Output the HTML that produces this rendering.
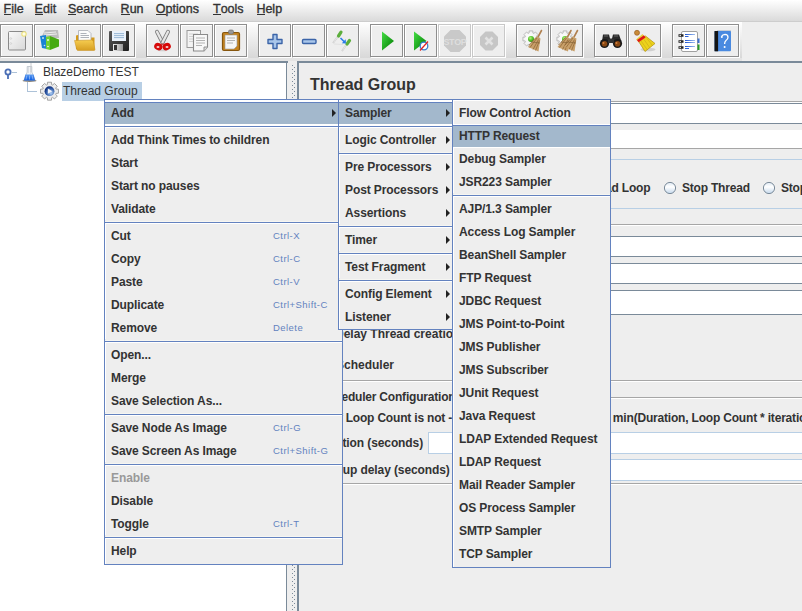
<!DOCTYPE html>
<html><head><meta charset="utf-8">
<style>
*{box-sizing:border-box;margin:0;padding:0}
html,body{width:802px;height:611px;overflow:hidden;background:#eeeeee;font-family:"Liberation Sans",sans-serif;color:#333}
.a{position:absolute}
#menubar{left:0;top:0;width:802px;height:22px;background:linear-gradient(#ffffff,#dadada);border-bottom:1px solid #cdcdcd}
.mb{position:absolute;top:2px;font:12.5px/15px "Liberation Sans",sans-serif;color:#333;white-space:nowrap;-webkit-text-stroke:0.35px #333}
.mb u{text-decoration:none;position:relative}
.mb u:after{content:"";position:absolute;left:0.4px;right:0;top:12px;height:1px;background:#333}
#toolbar{left:0;top:22px;width:742px;height:39px;background:linear-gradient(#ffffff 0,#d8d8d8 36px,#e4e4e4 36px)}
#tbrest{left:742px;top:22px;width:60px;height:39px;background:#eeeeee}
.tb{position:absolute;top:24px;width:33px;height:33px;border:1px solid #8e8e8e;box-shadow:inset 1px 1px 0 #fff,1px 1px 0 #fff;background:#eeeeee}
.tb.dis{border-color:#c8c8c8}
.tb svg{position:absolute;left:-1px;top:-1px}
#tbline{left:0;top:61px;width:802px;height:2px;background:linear-gradient(90deg,#7a8a99 0 288px,#eeeeee 288px 297px,#7a8a99 297px)}
#tree{left:0;top:63px;width:286px;height:548px;background:#fff}
#treeborder{left:286px;top:61px;width:1px;height:550px;background:#7a8a99}
#divider{left:287px;top:63px;width:10px;height:548px;background:#eeeeee}
#rpborder{left:297px;top:61px;width:2px;height:550px;background:#7a8a99}
#rp{left:299px;top:63px;width:503px;height:548px;background:#eeeeee}
.b{font:bold 12px "Liberation Sans",sans-serif;letter-spacing:-0.2px;white-space:nowrap;color:#333}
.menu{position:absolute;background:#eeeeee;border:1px solid #6382bf;box-shadow:inset 1px 1px 0 #fff;padding:1px 0 0 1px}
.it{position:relative;height:23px;font:bold 12px/25px "Liberation Sans",sans-serif;letter-spacing:-0.1px;white-space:nowrap;color:#333;padding-left:5px}
.it.sel{background:linear-gradient(#fff 0 1px,#6382bf 1px 2px,#a3b8cc 2px);margin-left:-1px;padding-left:6px}
.it.sel+.it,.it.sel+.sep{box-shadow:inset 0 1px 0 #fff}
.it .k{position:absolute;top:0;font:9.5px/24px "Liberation Sans",sans-serif;letter-spacing:0.45px;color:#6382bf}
.it .ar{position:absolute;top:8px;width:0;height:0;border-top:4px solid transparent;border-bottom:4px solid transparent;border-left:4px solid #222}
.it.dis{color:#999}
.it.sel .ar{margin-left:1px}
.sep{height:4px;background:linear-gradient(#eeeeee 0 1px,#f6f6f2 1px 2px,#6382bf 2px 3px,#fff 3px);margin-left:-1px}
.it.sel+.sep{background:linear-gradient(#fff 0 2px,#6382bf 2px 3px,#fff 3px)}
.hl{position:absolute;height:1px}
</style></head><body>

<!-- menubar -->
<div id="menubar" class="a"></div>
<div class="mb" style="left:3.6px"><u>F</u>ile</div>
<div class="mb" style="left:34.6px"><u>E</u>dit</div>
<div class="mb" style="left:68px"><u>S</u>earch</div>
<div class="mb" style="left:120.6px"><u>R</u>un</div>
<div class="mb" style="left:155.8px"><u>O</u>ptions</div>
<div class="mb" style="left:213px"><u>T</u>ools</div>
<div class="mb" style="left:256.4px"><u>H</u>elp</div>

<!-- toolbar -->
<div id="toolbar" class="a"></div>
<div id="tbrest" class="a"></div>
<div class="tb" style="left:0px"><svg width="34" height="34" viewBox="0 0 34 34"><defs><linearGradient id="g1" x1="0" y1="0" x2="1" y2="1"><stop offset="0" stop-color="#fafafa"/><stop offset="1" stop-color="#d8d8d8"/></linearGradient></defs>
<rect x="8.5" y="7.5" width="17" height="18.5" rx="1" fill="url(#g1)" stroke="#8a8a8a" stroke-width="1"/>
<circle cx="10.8" cy="14.5" r="0.8" fill="#fff" stroke="#aaa" stroke-width="0.4"/><circle cx="10.8" cy="19.5" r="0.8" fill="#fff" stroke="#aaa" stroke-width="0.4"/>
<circle cx="24" cy="10" r="2.2" fill="#fffde8" stroke="#ede27c" stroke-width="1.1"/></svg></div>
<div class="tb" style="left:34px"><svg width="34" height="34" viewBox="0 0 34 34"><polygon points="8,12 11,6 24,6 25,14 12,14" fill="#bdbdbd"/><path d="M10,9 L22,8 M10,11 L23,10" stroke="#eee" stroke-width="1"/>
<polygon points="6,12 12,11 13,25 8,24" fill="#1a84d4"/><circle cx="9" cy="14" r="1" fill="#cde"/><circle cx="10.5" cy="21.5" r="0.8" fill="#cde"/>
<polygon points="12,13 16,12 16,26 12,25" fill="#70d030"/><polygon points="16,12 25,15.5 25,22.5 16,26" fill="#46aa12"/>
<circle cx="14" cy="16" r="1" fill="#e8ffd8"/><circle cx="14" cy="22.5" r="0.8" fill="#fff"/></svg></div>
<div class="tb" style="left:68px"><svg width="34" height="34" viewBox="0 0 34 34"><path d="M8,11.5 L12,10.5 L13,13.5 L26.5,13.5 L26.5,25 L8,25 Z" fill="#d49a1a"/>
<path d="M10.5,6.5 L20,6.5 L23,9.5 L23,17 L10.5,17 Z" fill="#fbfbfb" stroke="#a8acb4" stroke-width="0.8"/>
<path d="M12.5,9.5 h6 M12.5,11.5 h8.5 M12.5,13.5 h8.5" stroke="#9aa0a8" stroke-width="0.8"/>
<defs><linearGradient id="g3" x1="0" y1="0" x2="0" y2="1"><stop offset="0" stop-color="#f6cd50"/><stop offset="1" stop-color="#d69e22"/></linearGradient></defs>
<path d="M6.5,16.5 L23.5,16 Q25,16 25.3,17.5 L27,25.5 Q27,26.5 26,26.5 L10,26.5 Q9,26.5 8.7,25.5 Z" fill="url(#g3)" stroke="#c89020" stroke-width="0.5"/></svg></div>
<div class="tb" style="left:102px"><svg width="34" height="34" viewBox="0 0 34 34"><defs><linearGradient id="g4" x1="0" y1="0" x2="1" y2="1"><stop offset="0" stop-color="#5a5a5a"/><stop offset="1" stop-color="#1e1e1e"/></linearGradient><linearGradient id="g4b" x1="0" y1="0" x2="1" y2="0"><stop offset="0" stop-color="#eee"/><stop offset="1" stop-color="#999"/></linearGradient></defs>
<rect x="7" y="7" width="20" height="20" rx="1" fill="url(#g4)"/>
<rect x="10" y="7" width="14" height="10" fill="#eaf2fb"/><path d="M12,9.6 h10 M12,11.6 h10 M12,13.6 h10" stroke="#8fb0d0" stroke-width="0.9"/>
<rect x="11" y="20" width="10" height="7" fill="url(#g4b)"/><rect x="12" y="21" width="3" height="5" fill="#333"/></svg></div>
<div class="tb" style="left:146px"><svg width="34" height="34" viewBox="0 0 34 34"><path d="M11,7.8 L16.5,18.5" stroke="#7a7a7a" stroke-width="3.9" stroke-linecap="round"/><path d="M11,7.8 L16.5,18.5" stroke="#e6e6e6" stroke-width="2.3" stroke-linecap="round"/>
<path d="M22,7.8 L16.5,18.5" stroke="#7a7a7a" stroke-width="3.9" stroke-linecap="round"/><path d="M22,7.8 L16.5,18.5" stroke="#e6e6e6" stroke-width="2.3" stroke-linecap="round"/>
<ellipse cx="16.5" cy="26.3" rx="5" ry="1" fill="#d0d0d0"/>
<path d="M16.5,19.5 L14,20.5 L18.8,20.5 Z" fill="#d60a0a"/>
<ellipse cx="12.3" cy="22.6" rx="4.2" ry="3.6" fill="#d60a0a" transform="rotate(25 12.3 22.6)"/><ellipse cx="20.7" cy="22.6" rx="4.2" ry="3.6" fill="#d60a0a" transform="rotate(-25 20.7 22.6)"/>
<ellipse cx="12" cy="23" rx="1.5" ry="1" fill="#f4d0d0"/><ellipse cx="21" cy="23" rx="1.5" ry="1" fill="#f4d0d0"/></svg></div>
<div class="tb" style="left:180px"><svg width="34" height="34" viewBox="0 0 34 34"><rect x="7" y="6.5" width="13.5" height="17" fill="#f4f4f4" stroke="#9a9a9a" stroke-width="1"/><path d="M9,10 h9 M9,12.5 h9 M9,15 h9 M9,17.5 h6" stroke="#ccc" stroke-width="0.9"/>
<path d="M13.5,10.5 H27.5 V23 L24,27 H13.5 Z" fill="#f8f8f8" stroke="#8a8a8a" stroke-width="1.1"/><path d="M24,27 V23 H27.5" fill="#ddd" stroke="#8a8a8a" stroke-width="0.9"/>
<path d="M16,14 h9 M16,16.5 h9 M16,19 h9 M16,21.5 h6" stroke="#aaa" stroke-width="0.9"/></svg></div>
<div class="tb" style="left:214px"><svg width="34" height="34" viewBox="0 0 34 34"><rect x="8.5" y="8.5" width="17" height="18" rx="1.5" fill="#c58420" stroke="#86560e" stroke-width="1.2"/>
<path d="M11,11 H23 V22 L20,25 H11 Z" fill="#f6f6f6" stroke="#999" stroke-width="0.6"/><path d="M13,14 h8 M13,16.5 h8 M13,19 h6" stroke="#aaa" stroke-width="0.9"/>
<rect x="14.5" y="6" width="5" height="4" rx="1.5" fill="#999" stroke="#666" stroke-width="0.6"/></svg></div>
<div class="tb" style="left:258px"><svg width="34" height="34" viewBox="0 0 34 34"><path d="M15,10.5 h4 v5 h5 v4 h-5 v5 h-4 v-5 h-5 v-4 h5 Z" fill="#a9c6ea" stroke="#3b64a8" stroke-width="1.4" stroke-linejoin="round"/></svg></div>
<div class="tb" style="left:292px"><svg width="34" height="34" viewBox="0 0 34 34"><rect x="10.5" y="15.5" width="13.5" height="4" rx="1" fill="#a9c6ea" stroke="#3b64a8" stroke-width="1.4"/></svg></div>
<div class="tb" style="left:326px"><svg width="34" height="34" viewBox="0 0 34 34"><path d="M7,19 L13,11" stroke="#c8c8c8" stroke-width="1.6"/><path d="M7.5,18.5 L12.5,11.5" stroke="#fff" stroke-width="0.6"/>
<path d="M12.5,12 L15,8.2" stroke="#5cae3c" stroke-width="3.2" stroke-linecap="round"/>
<path d="M16,27 L21.5,19" stroke="#c8c8c8" stroke-width="1.6"/><path d="M16.5,26.5 L21,19.5" stroke="#fff" stroke-width="0.6"/>
<path d="M21,20 L23.5,16.5" stroke="#5cae3c" stroke-width="3.2" stroke-linecap="round"/>
<path d="M14.5,14 L18.5,18" stroke="#2a7de8" stroke-width="1.6"/><path d="M20,19.5 L15.8,19.2 L19.7,15.3 Z" fill="#2a7de8"/>
<path d="M8,20 L17,20.5" stroke="#ddd" stroke-width="0.8"/></svg></div>
<div class="tb" style="left:370px"><svg width="34" height="34" viewBox="0 0 34 34"><defs><linearGradient id="g11" x1="0" y1="0" x2="1" y2="1"><stop offset="0" stop-color="#44dd44"/><stop offset="1" stop-color="#007a00"/></linearGradient></defs>
<path d="M12,7.5 L24,17 L12,26.5 Z" fill="url(#g11)"/></svg></div>
<div class="tb" style="left:404px"><svg width="34" height="34" viewBox="0 0 34 34"><defs><linearGradient id="g12" x1="0" y1="0" x2="1" y2="1"><stop offset="0" stop-color="#44dd44"/><stop offset="1" stop-color="#007a00"/></linearGradient></defs>
<path d="M10,7.5 L22.5,17 L10,26.5 Z" fill="url(#g12)"/>
<circle cx="20" cy="22" r="3.8" fill="#fff" stroke="#3a7ed0" stroke-width="1.3"/><path d="M16,26.5 L24,17.5" stroke="#e02020" stroke-width="1.2"/></svg></div>
<div class="tb dis" style="left:438px"><svg width="34" height="34" viewBox="0 0 34 34"><polygon points="12.5,6 21.5,6 28,12.5 28,21.5 21.5,28 12.5,28 6,21.5 6,12.5" fill="#c9c9c9"/>
<text x="17" y="20.8" text-anchor="middle" font-family="Liberation Sans" font-weight="bold" font-size="9" letter-spacing="-0.3" fill="#dedede">STOP</text></svg></div>
<div class="tb dis" style="left:472px"><svg width="34" height="34" viewBox="0 0 34 34"><polygon points="13.5,7.5 20.5,7.5 26,13 26,21 20.5,26.5 13.5,26.5 8,21 8,13" fill="#c6c6c6"/>
<path d="M13.5,13.5 L20.5,20.5 M20.5,13.5 L13.5,20.5" stroke="#e2e2e2" stroke-width="2.6"/></svg></div>
<div class="tb" style="left:516px"><svg width="34" height="34" viewBox="0 0 34 34"><path d="M6.55,-2.17 L8.98,-2.01 L8.98,2.01 L6.55,2.17 L6.17,3.10 L7.77,4.93 L4.93,7.77 L3.10,6.17 L2.17,6.55 L2.01,8.98 L-2.01,8.98 L-2.17,6.55 L-3.10,6.17 L-4.93,7.77 L-7.77,4.93 L-6.17,3.10 L-6.55,2.17 L-8.98,2.01 L-8.98,-2.01 L-6.55,-2.17 L-6.17,-3.10 L-7.77,-4.93 L-4.93,-7.77 L-3.10,-6.17 L-2.17,-6.55 L-2.01,-8.98 L2.01,-8.98 L2.17,-6.55 L3.10,-6.17 L4.93,-7.77 L7.77,-4.93 L6.17,-3.10 Z" fill="url(#gw)" stroke="#b4b4b4" stroke-width="1" transform="translate(15,15) scale(0.9)"/>
<defs><radialGradient id="gw" cx="0.4" cy="0.4" r="0.8"><stop offset="0" stop-color="#ffffff"/><stop offset="0.7" stop-color="#eeeeee"/><stop offset="1" stop-color="#cfcfcf"/></radialGradient><radialGradient id="gg" cx="0.4" cy="0.35" r="0.7"><stop offset="0" stop-color="#b8f080"/><stop offset="0.5" stop-color="#5cc830"/><stop offset="1" stop-color="#2a8a10"/></radialGradient></defs>
<circle cx="15" cy="15" r="3" fill="url(#gg)"/><g transform="translate(0,0)"><path d="M25.5,6.5 L22,13" stroke="#b08050" stroke-width="1.6" stroke-linecap="round"/>
<path d="M20.5,12.5 L24.5,14.5 L22.5,27.5 L12,23 Z" fill="#c8a06a"/>
<path d="M14,23.5 L21,14 M17,25.5 L22.5,15.5 M19.5,26.5 L23.5,16.5 M13,21 L20,13.5" stroke="#8c6230" stroke-width="0.7"/>
<path d="M15.5,18 L24,19" stroke="#7a5a30" stroke-width="0.6"/></g></svg></div>
<div class="tb" style="left:550px"><svg width="34" height="34" viewBox="0 0 34 34"><path d="M6.55,-2.17 L8.98,-2.01 L8.98,2.01 L6.55,2.17 L6.17,3.10 L7.77,4.93 L4.93,7.77 L3.10,6.17 L2.17,6.55 L2.01,8.98 L-2.01,8.98 L-2.17,6.55 L-3.10,6.17 L-4.93,7.77 L-7.77,4.93 L-6.17,3.10 L-6.55,2.17 L-8.98,2.01 L-8.98,-2.01 L-6.55,-2.17 L-6.17,-3.10 L-7.77,-4.93 L-4.93,-7.77 L-3.10,-6.17 L-2.17,-6.55 L-2.01,-8.98 L2.01,-8.98 L2.17,-6.55 L3.10,-6.17 L4.93,-7.77 L7.77,-4.93 L6.17,-3.10 Z" fill="url(#gw)" stroke="#b4b4b4" stroke-width="1" transform="translate(15,15) scale(0.9)"/>
<defs><radialGradient id="gw" cx="0.4" cy="0.4" r="0.8"><stop offset="0" stop-color="#ffffff"/><stop offset="0.7" stop-color="#eeeeee"/><stop offset="1" stop-color="#cfcfcf"/></radialGradient><radialGradient id="gg" cx="0.4" cy="0.35" r="0.7"><stop offset="0" stop-color="#b8f080"/><stop offset="0.5" stop-color="#5cc830"/><stop offset="1" stop-color="#2a8a10"/></radialGradient></defs>
<circle cx="15" cy="15" r="3" fill="url(#gg)"/><g transform="translate(-4.5,0)"><path d="M25.5,6.5 L22,13" stroke="#b08050" stroke-width="1.6" stroke-linecap="round"/>
<path d="M20.5,12.5 L24.5,14.5 L22.5,27.5 L12,23 Z" fill="#c8a06a"/>
<path d="M14,23.5 L21,14 M17,25.5 L22.5,15.5 M19.5,26.5 L23.5,16.5 M13,21 L20,13.5" stroke="#8c6230" stroke-width="0.7"/>
<path d="M15.5,18 L24,19" stroke="#7a5a30" stroke-width="0.6"/></g><g transform="translate(2,0)"><path d="M25.5,6.5 L22,13" stroke="#b08050" stroke-width="1.6" stroke-linecap="round"/>
<path d="M20.5,12.5 L24.5,14.5 L22.5,27.5 L12,23 Z" fill="#c8a06a"/>
<path d="M14,23.5 L21,14 M17,25.5 L22.5,15.5 M19.5,26.5 L23.5,16.5 M13,21 L20,13.5" stroke="#8c6230" stroke-width="0.7"/>
<path d="M15.5,18 L24,19" stroke="#7a5a30" stroke-width="0.6"/></g></svg></div>
<div class="tb" style="left:594px"><svg width="34" height="34" viewBox="0 0 34 34"><path d="M9,10.5 h6 l1,4 h2 l1,-4 h6 l2.5,7 h-19.5 Z" fill="#2a2a2a"/>
<circle cx="10.5" cy="19.5" r="4.6" fill="#1a1a1a"/><circle cx="23.5" cy="19.5" r="4.6" fill="#1a1a1a"/>
<rect x="14" y="15" width="6" height="4" fill="#333"/>
<circle cx="10.5" cy="19.8" r="2.8" fill="#8a4812"/><circle cx="23.5" cy="19.8" r="2.8" fill="#8a4812"/>
<circle cx="9.5" cy="19" r="1" fill="#d08040"/><circle cx="22.5" cy="19" r="1" fill="#d08040"/>
<path d="M10,12 h4 M20,12 h4" stroke="#777" stroke-width="0.8"/></svg></div>
<div class="tb" style="left:628px"><svg width="34" height="34" viewBox="0 0 34 34"><ellipse cx="20" cy="25.5" rx="7.5" ry="1.8" fill="#d0d0d0"/>
<circle cx="9" cy="8.8" r="2.5" fill="#c88a38" stroke="#9a6020" stroke-width="0.7"/>
<path d="M10,16.5 L17.5,12 L27,19.5 L17,27.5 Z" fill="#ecd21c" stroke="#b09010" stroke-width="0.7" stroke-linejoin="round"/>
<path d="M16,15.5 L22,24 M19,14.5 L24.5,21.5 M13,17 L19.5,26" stroke="#c8a818" stroke-width="0.6"/>
<path d="M8,15.5 L14.5,10 L17,13 L10.5,18 Z" fill="#e8d040"/>
<path d="M9.8,17.2 L16.8,12.3" stroke="#e01818" stroke-width="2.8"/></svg></div>
<div class="tb" style="left:672px"><svg width="34" height="34" viewBox="0 0 34 34"><rect x="9.5" y="7.5" width="16" height="20" rx="1.5" fill="#fff" stroke="#a0a0a0" stroke-width="1"/>
<path d="M6.5,11.5 h5 M6.5,17.5 h5 M6.5,23.5 h5" stroke="#222" stroke-width="2.4"/><path d="M7.5,11.5 h1.5 M7.5,17.5 h1.5 M7.5,23.5 h1.5" stroke="#ddd" stroke-width="1.2"/>
<defs><linearGradient id="bl" x1="0" y1="0" x2="1" y2="0"><stop offset="0" stop-color="#1850d0"/><stop offset="1" stop-color="#a0c0f0"/></linearGradient></defs>
<path d="M13,10.5 h10 M13,16.5 h10 M13,18.5 h10 M13,22.5 h10" stroke="url(#bl)" stroke-width="1"/>
<path d="M13,12.5 h3.5 M13,24.5 h4" stroke="#2a60d8" stroke-width="1"/>
<rect x="25.5" y="14.5" width="2" height="4.5" fill="#3a70d0"/><rect x="25.5" y="20.5" width="2" height="5.5" fill="#2a9a2a"/></svg></div>
<div class="tb" style="left:706px"><svg width="34" height="34" viewBox="0 0 34 34"><rect x="11" y="6.2" width="14" height="2" fill="#c0c8d0"/>
<rect x="8.5" y="7" width="16.5" height="20.3" rx="1" fill="#4a8ae0"/><rect x="8.5" y="7" width="3.6" height="20.3" fill="#141414"/>
<path d="M15.5,12.5 Q16.5,10.3 19,10.3 Q22,10.4 22,13.2 Q22,15.2 20,16.5 Q18.6,17.6 18.6,20" fill="none" stroke="#fff" stroke-width="1.3"/>
<circle cx="18.6" cy="23" r="1" fill="#fff"/><circle cx="15.8" cy="13" r="1" fill="#fff"/></svg></div>

<div id="tbline" class="a"></div>
<div id="tree" class="a"></div>
<div id="treeborder" class="a"></div>
<div class="a" style="left:287px;top:63px;width:1px;height:548px;background:#fff"></div>
<div id="divider" class="a"></div>
<div class="a" style="left:291px;top:64px;width:5px;height:547px;background-image:radial-gradient(circle at 1.5px 1.5px,#7a8a99 0.9px,transparent 1px),radial-gradient(circle at 3.5px 3.5px,#7a8a99 0.9px,transparent 1px);background-size:4px 4px,4px 4px"></div>
<div id="rpborder" class="a"></div>
<div id="rp" class="a"></div>

<!-- right panel content -->
<div class="a" style="left:310px;top:76px;font:bold 16px/18px 'Liberation Sans',sans-serif;color:#333;white-space:nowrap">Thread Group</div>
<!-- name field -->
<div class="hl" style="left:380px;top:101px;width:422px;background:#a6a6a6"></div>
<div class="a" style="left:380px;top:102px;width:422px;height:22px;background:#fff;border-top:1px solid #fff;border-bottom:1px solid #7a8a99"></div>
<div class="hl" style="left:380px;top:103px;width:422px;background:#7a8a99"></div>
<!-- comments -->
<div class="a" style="left:380px;top:130px;width:422px;height:19px;background:#fff;border-bottom:1px solid #a6a6a6"></div>
<!-- action titled border -->
<div class="hl" style="left:312px;top:159px;width:490px;background:#b8cfe5"></div>
<div class="hl" style="left:312px;top:208px;width:490px;background:#b8cfe5"></div>
<div class="a b" style="left:522px;top:181px;line-height:14px">Start Next Thread Loop</div>
<div class="a b" style="left:682px;top:181px;line-height:14px">Stop Thread</div>
<div class="a b" style="left:781px;top:181px;line-height:14px">Stop Test</div>
<svg class="a" style="left:660px;top:178px" width="20" height="20" viewBox="660 178 20 20"><defs><linearGradient id="rg" x1="0" y1="0" x2="0" y2="1"><stop offset="0" stop-color="#dde8f3"/><stop offset="0.4" stop-color="#ffffff"/><stop offset="1" stop-color="#c4d8ec"/></linearGradient></defs><circle cx="670" cy="188" r="5.6" fill="url(#rg)" stroke="#7a8a99" stroke-width="1"/></svg>
<svg class="a" style="left:759px;top:178px" width="20" height="20" viewBox="759 178 20 20"><circle cx="769" cy="188" r="5.6" fill="url(#rg)" stroke="#7a8a99" stroke-width="1"/></svg>
<!-- thread properties -->
<div class="hl" style="left:312px;top:224px;width:490px;background:#a6a6a6"></div>
<div class="hl" style="left:312px;top:225px;width:490px;background:#fff"></div>
<div class="a" style="left:450px;top:236px;width:352px;height:21px;background:#fff;border-top:1px solid #7a8a99;border-bottom:1px solid #7a8a99"></div>
<div class="a" style="left:450px;top:263px;width:352px;height:21px;background:#fff;border-top:1px solid #7a8a99;border-bottom:1px solid #7a8a99"></div>
<div class="a" style="left:450px;top:290px;width:352px;height:25px;background:#fff;border-top:1px solid #7a8a99;border-bottom:1px solid #7a8a99"></div>
<div class="a b" style="left:335px;top:327px;line-height:14px;letter-spacing:0">Delay Thread creation until needed</div>
<div class="a b" style="left:336px;top:358px;line-height:14px;letter-spacing:0">Scheduler</div>
<div class="hl" style="left:312px;top:380px;width:490px;background:#a6a6a6"></div>
<div class="hl" style="left:312px;top:381px;width:490px;background:#fff"></div>
<div class="hl" style="left:312px;top:397px;width:490px;background:#a6a6a6"></div>
<div class="hl" style="left:312px;top:398px;width:490px;background:#fff"></div>
<div class="a b" style="left:317px;top:390px;line-height:14px;background:#eeeeee;padding:0 3px">Scheduler Configuration</div>
<div class="a b" style="left:335.6px;top:411px;line-height:14px;letter-spacing:-0.19px">If Loop Count is not -1 or Forever, duration will be min(Duration, Loop Count * iteration duration)</div>
<div class="a b" style="left:315.5px;top:436px;line-height:14px;letter-spacing:-0.1px">Duration (seconds)</div>
<div class="a" style="left:428px;top:432px;width:374px;height:22px;background:#fff;border:1px solid #b8cfe5;border-right:0"></div>
<div class="a b" style="left:316px;top:463px;line-height:14px;letter-spacing:-0.1px">Startup delay (seconds)</div>
<div class="a" style="left:455px;top:459px;width:347px;height:22px;background:#fff;border:1px solid #b8cfe5;border-right:0"></div>
<div class="hl" style="left:312px;top:483px;width:490px;background:#a6a6a6"></div>
<div class="hl" style="left:312px;top:484px;width:490px;background:#fff"></div>

<!-- tree -->
<svg class="a" style="left:0;top:63px" width="70" height="40" viewBox="0 63 70 40">
 <defs>
  <linearGradient id="fl" x1="0" y1="0" x2="0" y2="1"><stop offset="0" stop-color="#5a9af0"/><stop offset="1" stop-color="#0a5ae0"/></linearGradient>
  <radialGradient id="gb" cx="0.65" cy="0.7" r="0.7"><stop offset="0" stop-color="#b0cff5"/><stop offset="0.6" stop-color="#3a66b0"/><stop offset="1" stop-color="#0c2a78"/></radialGradient>
 </defs>
 <circle cx="8" cy="72" r="2.6" fill="none" stroke="#4a6eb5" stroke-width="1.8"/>
 <rect x="7.1" y="74" width="1.8" height="5" fill="#4a6eb5"/>
 <rect x="11" y="72" width="6" height="1" fill="#adc2d8"/>
 <rect x="27" y="82" width="1" height="9.5" fill="#adc2d8"/>
 <rect x="27" y="91" width="10" height="1" fill="#adc2d8"/>
 <ellipse cx="29.5" cy="80.8" rx="7" ry="1.1" fill="#3a3020" opacity="0.6"/>
 <path d="M27.2,66.5 L31.8,66.5 L31.8,72 L35,80 L24,80 L27.2,72 Z" fill="#f2f4f6" stroke="#b4bcc6" stroke-width="0.8"/>
 <path d="M28.5,67 L28.5,73 M30.6,67 L30.6,74" stroke="#d4d8de" stroke-width="0.8"/>
 <path d="M25.3,74.6 L33.7,74.6 L35,80.4 L24,80.4 Z" fill="url(#fl)"/>
 <path d="M26.8,75.5 L26,79.5 M29.5,75.5 L29.5,79.5 M32.2,75.5 L33,79.5" stroke="#a8c8f8" stroke-width="0.8" opacity="0.8"/>
 <rect x="30.5" y="63" width="1" height="9" fill="#c8ccd0"/>
 <g transform="translate(49.5,91.2)">
  <path d="M6.55,-2.17 L8.98,-2.01 L8.98,2.01 L6.55,2.17 L6.17,3.10 L7.77,4.93 L4.93,7.77 L3.10,6.17 L2.17,6.55 L2.01,8.98 L-2.01,8.98 L-2.17,6.55 L-3.10,6.17 L-4.93,7.77 L-7.77,4.93 L-6.17,3.10 L-6.55,2.17 L-8.98,2.01 L-8.98,-2.01 L-6.55,-2.17 L-6.17,-3.10 L-7.77,-4.93 L-4.93,-7.77 L-3.10,-6.17 L-2.17,-6.55 L-2.01,-8.98 L2.01,-8.98 L2.17,-6.55 L3.10,-6.17 L4.93,-7.77 L7.77,-4.93 L6.17,-3.10 Z" fill="#ececec" stroke="#9a9a9a" stroke-width="0.9"/>
  <circle r="4.9" fill="url(#gb)"/>
  <path d="M-1.6,-2.6 L2.8,0 L-1.6,2.6 Z" fill="#f4f6fa"/>
 </g>
</svg>
<div class="a" style="left:43px;top:65px;font:12px/14px 'Liberation Sans',sans-serif;color:#333;white-space:nowrap">BlazeDemo TEST</div>
<div class="a" style="left:62px;top:82px;width:80px;height:19px;background:#b8cfe5"></div>
<div class="a" style="left:63px;top:84px;font:12px/14px 'Liberation Sans',sans-serif;color:#333;white-space:nowrap">Thread Group</div>

<!-- main popup -->
<div class="menu" style="left:104px;top:99px;width:239px;height:466px">
 <div class="it sel">Add<span class="ar" style="left:226px"></span></div>
 <div class="sep"></div>
 <div class="it">Add Think Times to children</div>
 <div class="it">Start</div>
 <div class="it">Start no pauses</div>
 <div class="it">Validate</div>
 <div class="sep"></div>
 <div class="it">Cut<span class="k" style="left:167px">Ctrl-X</span></div>
 <div class="it">Copy<span class="k" style="left:167px">Ctrl-C</span></div>
 <div class="it">Paste<span class="k" style="left:167px">Ctrl-V</span></div>
 <div class="it">Duplicate<span class="k" style="left:167px">Ctrl+Shift-C</span></div>
 <div class="it">Remove<span class="k" style="left:167px">Delete</span></div>
 <div class="sep"></div>
 <div class="it">Open...</div>
 <div class="it">Merge</div>
 <div class="it">Save Selection As...</div>
 <div class="sep"></div>
 <div class="it">Save Node As Image<span class="k" style="left:167px">Ctrl-G</span></div>
 <div class="it">Save Screen As Image<span class="k" style="left:167px">Ctrl+Shift-G</span></div>
 <div class="sep"></div>
 <div class="it dis">Enable</div>
 <div class="it">Disable</div>
 <div class="it">Toggle<span class="k" style="left:167px">Ctrl-T</span></div>
 <div class="sep"></div>
 <div class="it">Help</div>
</div>

<!-- sub popup -->
<div class="menu" style="left:338px;top:99px;width:119px;height:231px">
 <div class="it sel">Sampler<span class="ar" style="left:106px"></span></div>
 <div class="sep"></div>
 <div class="it">Logic Controller<span class="ar" style="left:106px"></span></div>
 <div class="sep"></div>
 <div class="it">Pre Processors<span class="ar" style="left:106px"></span></div>
 <div class="it">Post Processors<span class="ar" style="left:106px"></span></div>
 <div class="it">Assertions<span class="ar" style="left:106px"></span></div>
 <div class="sep"></div>
 <div class="it">Timer<span class="ar" style="left:106px"></span></div>
 <div class="sep"></div>
 <div class="it">Test Fragment<span class="ar" style="left:106px"></span></div>
 <div class="sep"></div>
 <div class="it">Config Element<span class="ar" style="left:106px"></span></div>
 <div class="it">Listener<span class="ar" style="left:106px"></span></div>
</div>

<!-- third popup -->
<div class="menu" style="left:452px;top:99px;width:159px;height:469px">
 <div class="it">Flow Control Action</div>
 <div class="it sel">HTTP Request</div>
 <div class="it">Debug Sampler</div>
 <div class="it">JSR223 Sampler</div>
 <div class="sep"></div>
 <div class="it">AJP/1.3 Sampler</div>
 <div class="it">Access Log Sampler</div>
 <div class="it">BeanShell Sampler</div>
 <div class="it">FTP Request</div>
 <div class="it">JDBC Request</div>
 <div class="it">JMS Point-to-Point</div>
 <div class="it">JMS Publisher</div>
 <div class="it">JMS Subscriber</div>
 <div class="it">JUnit Request</div>
 <div class="it">Java Request</div>
 <div class="it">LDAP Extended Request</div>
 <div class="it">LDAP Request</div>
 <div class="it">Mail Reader Sampler</div>
 <div class="it">OS Process Sampler</div>
 <div class="it">SMTP Sampler</div>
 <div class="it">TCP Sampler</div>
</div>

</body></html>
